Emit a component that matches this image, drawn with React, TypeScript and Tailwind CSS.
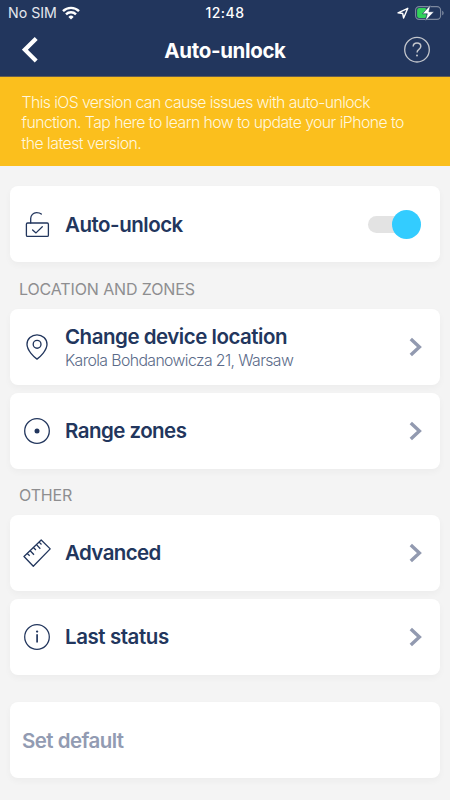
import type { ReactNode } from 'react';

const Chevron = () => (
  <svg className="mr-[18px] h-5 w-[13px] shrink-0" viewBox="0 0 13 20" fill="none">
    <path d="M1.8 1.9 10.4 10 1.8 18.1" stroke="#929AB0" strokeWidth="3.4" />
  </svg>
);

const LockIcon = () => (
  <svg className="size-7" viewBox="0 0 28 28" fill="none" stroke="#22365d" strokeWidth="1.3" strokeLinecap="round" strokeLinejoin="round">
    <rect x="3.4" y="13" width="22" height="13.4" rx="1.2" />
    <path d="M7.7 13V8.5a5.8 5.8 0 0 1 5.8-5.8c2 0 3.6.3 4.8 1.4M9.6 19.9l3.4 3 6.3-6.2" />
  </svg>
);

const PinIcon = () => (
  <svg className="size-7" viewBox="0 0 28 28" fill="none" stroke="#22365d" strokeWidth="1.35" strokeLinejoin="round">
    <path d="M14 26.1C11.3 24.2 4 17.5 4 11.3a10 9.5 0 0 1 20 0C24 17.5 16.7 24.2 14 26.1Z" />
    <circle cx="14.1" cy="11.3" r="3.9" />
  </svg>
);

const ZoneIcon = () => (
  <svg className="size-7" viewBox="0 0 28 28" fill="none">
    <circle cx="14" cy="14" r="12.3" stroke="#22365d" strokeWidth="1.3" />
    <circle cx="14" cy="14" r="2.5" fill="#22365d" />
  </svg>
);

const RulerIcon = () => (
  <svg className="size-7" viewBox="0 0 28 28" fill="none" stroke="#22365d" strokeWidth="1.3" strokeLinejoin="round">
    <path d="M1 17.5 18.2 1 27.2 9.9 10.3 27.3Z" />
    <path d="m4.2 14.6 2.5 2.2M7.2 11.7l3.8 4.1M10.4 8.5l2.5 2.5M13.5 5.6l3.8 4.1M16.1 3.1l2.4 2.4" />
  </svg>
);

const InfoIcon = () => (
  <svg className="size-7" viewBox="0 0 28 28" fill="none">
    <circle cx="14" cy="14" r="12.3" stroke="#22365d" strokeWidth="1.25" />
    <path d="M14.1 11.2v8.2" stroke="#22365d" strokeWidth="1.7" />
    <circle cx="14.1" cy="8.6" r="1.15" fill="#22365d" />
  </svg>
);

function Card({ icon, children, end, className = '' }: { icon: ReactNode; children: ReactNode; end: ReactNode; className?: string }) {
  return (
    <div className={`flex h-[76.2px] items-center rounded-[8px] bg-white pl-[13px] shadow-[0_3px_7px_rgba(0,0,0,0.035)] ${className}`}>
      <div className="w-[42px] shrink-0">{icon}</div>
      <div className="flex-1 pt-px whitespace-nowrap">{children}</div>
      {end}
    </div>
  );
}

const title = 'text-[20.5px] leading-[24px] font-semibold text-[#22365d]';
const section = 'flex items-center pt-[7px] pl-[9px] text-[16px] text-[#8e8e90]';

export default function App() {
  return (
    <div className="h-[800px] w-[450px] overflow-hidden bg-[#f4f4f4] font-['Inter','Liberation_Sans',sans-serif]">
      <header className="h-[77px] border-b border-[#655d51] bg-[#22365d] text-white">
        <div className="grid h-6 grid-cols-3 items-center text-[14px] leading-[24px]">
          <div className="flex items-center pl-2">
            <span className="w-[54px] pt-px text-[14.2px] whitespace-nowrap text-[#e4e7ed]">No SIM</span>
            <svg className="h-[14px] w-[18px]" viewBox="0 0 18 14" fill="none" stroke="white" strokeWidth="2.4">
              <path d="M1 5.2a11.3 11.3 0 0 1 16 0M4 8.4a7 7 0 0 1 10 0" />
              <path d="M6.4 10.9a3.7 3.7 0 0 1 5.2 0L9 13.5Z" fill="white" stroke="none" />
            </svg>
          </div>
          <span className="pt-px text-center font-medium tracking-[0.5px]">12:48</span>
          <div className="flex items-center justify-end pr-[6px]">
            <svg className="mr-[6px] h-3 w-3" viewBox="0 0 12 12" fill="none" stroke="white" strokeWidth="1.4" strokeLinejoin="round">
              <path d="M1 5.8 10.8 1.3 6.6 11 5.7 6.5Z" />
            </svg>
            <svg className="h-4 w-[29px]" viewBox="0 0 29 16" fill="none">
              <rect x=".6" y="1.6" width="25" height="12.8" rx="3.6" stroke="#7d899f" strokeWidth="1.1" />
              <path d="M27.2 5.7c1.9.7 1.9 3.9 0 4.6Z" fill="#7d899f" />
              <rect x="2.1" y="3.1" width="9.5" height="9.8" rx="2" fill="#32d15a" />
              <path d="M15.6-.2 7.4 8.8h4.9L10.2 16.2l8.8-9.5h-5.1Z" fill="white" stroke="#22365d" strokeWidth=".6" />
            </svg>
          </div>
        </div>
        <div className="flex h-[52px] items-center justify-between pr-[19px] pl-[22px]">
          <svg className="h-[26px] w-[18px]" viewBox="0 0 18 26" fill="none">
            <path d="M14.2 1.5 2.9 12.7l11.3 11.2" stroke="white" strokeWidth="4.2" />
          </svg>
          <h1 className="pt-[2px] pl-[7px] text-[20.5px] leading-[26px] font-bold tracking-[-0.35px]">Auto-unlock</h1>
          <svg className="size-7" viewBox="0 0 28 28" fill="none" stroke="#c3c6cc">
            <circle cx="14" cy="13.7" r="12.3" strokeWidth="1.3" />
            <path d="M10.2 10.5c.1-2.2 1.7-3.5 3.8-3.5 2.2 0 3.8 1.4 3.8 3.3 0 1.8-1 2.6-2.1 3.4-1.2.8-1.6 1.4-1.6 2.9" strokeWidth="1.5" />
            <circle cx="14" cy="19.4" r="1" fill="#c3c6cc" stroke="none" />
          </svg>
        </div>
      </header>

      <div className="h-[89px] bg-[#fbbf1d] pt-[15.5px] pl-[21.5px] text-[15.8px] leading-[20.5px] font-light whitespace-nowrap text-[#fff7df]">
        <p className="tracking-[-0.59px]">This iOS version can cause issues with auto-unlock</p>
        <p className="tracking-[-0.55px]">function. Tap here to learn how to update your iPhone to</p>
        <p className="tracking-[-0.5px]">the latest version.</p>
      </div>

      <main className="px-[10px] pt-5">
        <Card
          icon={<LockIcon />}
          end={
            <div className="mr-[19px] flex h-[29px] w-[53px] items-center">
              <div className="h-[17px] w-9 rounded-full bg-[#e3e3e3]" />
              <div className="-ml-3 size-[29px] shrink-0 rounded-full bg-[#33ccff]" />
            </div>
          }
        >
          <h2 className={`${title} pt-px tracking-[-0.48px]`}>Auto-unlock</h2>
        </Card>
        <h3 className={`${section} h-[46.4px] tracking-[-0.13px]`}>LOCATION AND ZONES</h3>
        <Card icon={<PinIcon />} end={<Chevron />}>
          <h2 className={`${title} pt-[3px] tracking-[-0.48px]`}>Change device location</h2>
          <p className="text-[15.8px] leading-[24px] font-light tracking-[-0.6px] text-[#5b6b89]">Karola Bohdanowicza 21, Warsaw</p>
        </Card>
        <Card className="mt-[8px]" icon={<ZoneIcon />} end={<Chevron />}>
          <h2 className={`${title} tracking-[-0.54px]`}>Range zones</h2>
        </Card>
        <h3 className={`${section} h-[45.8px] tracking-[-0.13px]`}>OTHER</h3>
        <Card icon={<RulerIcon />} end={<Chevron />}>
          <h2 className={`${title} tracking-[-0.6px]`}>Advanced</h2>
        </Card>
        <Card className="mt-[7.8px]" icon={<InfoIcon />} end={<Chevron />}>
          <h2 className={`${title} tracking-[-0.43px]`}>Last status</h2>
        </Card>
        <div className="mt-[26.8px] flex h-[76.2px] items-center rounded-[8px] bg-white pt-[3px] pl-3 text-[20.5px] font-semibold tracking-[-0.55px] text-[#929bb2] shadow-[0_3px_7px_rgba(0,0,0,0.035)]">
          Set default
        </div>
      </main>
    </div>
  );
}
